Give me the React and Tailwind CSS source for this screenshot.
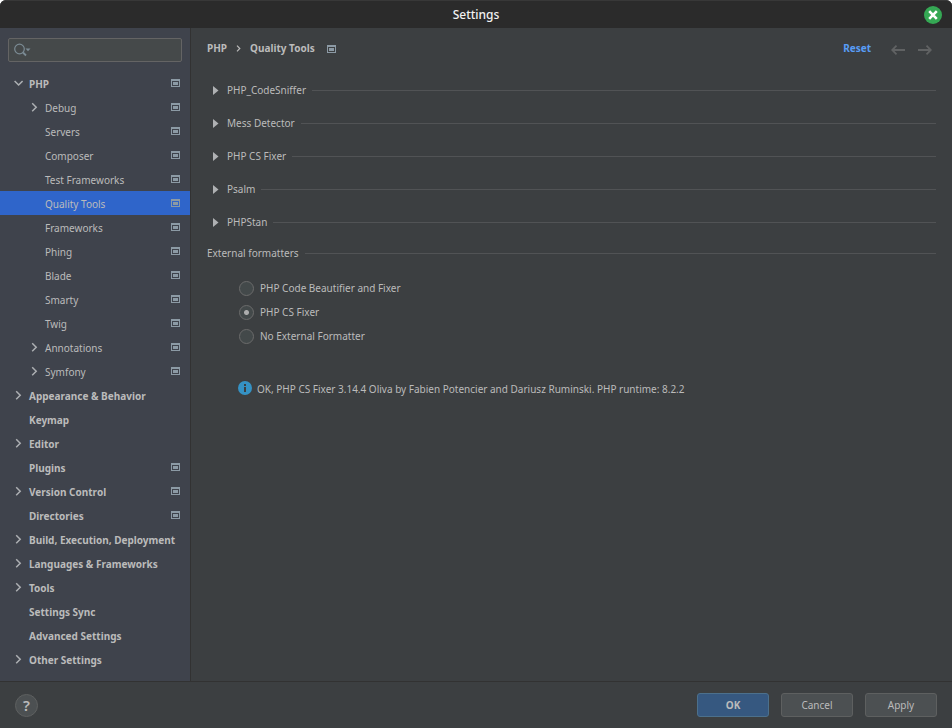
import { useState } from 'react';

const treeItems = [
    { label: 'PHP', level: 0, arrow: 'down', project: true },
    { label: 'Debug', level: 1, arrow: 'right', project: true },
    { label: 'Servers', level: 1, project: true },
    { label: 'Composer', level: 1, project: true },
    { label: 'Test Frameworks', level: 1, project: true },
    { label: 'Quality Tools', level: 1, project: true },
    { label: 'Frameworks', level: 1, project: true },
    { label: 'Phing', level: 1, project: true },
    { label: 'Blade', level: 1, project: true },
    { label: 'Smarty', level: 1, project: true },
    { label: 'Twig', level: 1, project: true },
    { label: 'Annotations', level: 1, arrow: 'right', project: true },
    { label: 'Symfony', level: 1, arrow: 'right', project: true },
    { label: 'Appearance & Behavior', level: 0, arrow: 'right' },
    { label: 'Keymap', level: 0 },
    { label: 'Editor', level: 0, arrow: 'right' },
    { label: 'Plugins', level: 0, project: true },
    { label: 'Version Control', level: 0, arrow: 'right', project: true },
    { label: 'Directories', level: 0, project: true },
    { label: 'Build, Execution, Deployment', level: 0, arrow: 'right' },
    { label: 'Languages & Frameworks', level: 0, arrow: 'right' },
    { label: 'Tools', level: 0, arrow: 'right' },
    { label: 'Settings Sync', level: 0 },
    { label: 'Advanced Settings', level: 0 },
    { label: 'Other Settings', level: 0, arrow: 'right' },
];

const tools = ['PHP_CodeSniffer', 'Mess Detector', 'PHP CS Fixer', 'Psalm', 'PHPStan'];

const formatters = ['PHP Code Beautifier and Fixer', 'PHP CS Fixer', 'No External Formatter'];

const ProjectIcon = () => (
    <svg width="9" height="8" viewBox="0 0 9 8" shapeRendering="crispEdges" className="shrink-0" aria-hidden="true">
        <path d="M0 0h9v8H0z M1 2v5h7V2z" fill="#8c9aa5" fillRule="evenodd" />
        <path d="M2 3h5v3H2z" fill="#8c9aa5" />
    </svg>
);

const Chevron = ({ direction }) => (
    <svg width="10" height="10" viewBox="0 0 10 10" fill="none" stroke="#adb0b3" strokeWidth="1.5" className="shrink-0" aria-hidden="true">
        {direction === 'down' && <path d="M1.6 3l4 4 4-4" />}
        {direction === 'right' && <path d="M3.2 1.3l4 4-4 4" />}
    </svg>
);

const Arrow = ({ flipped }) => (
    <svg width="14" height="10" viewBox="0 0 14 10" fill="none" stroke="#606263" strokeWidth="1.8" aria-hidden="true">
        {flipped ? <path d="M0 5h12.5M8.5 .7L12.8 5 8.5 9.3" /> : <path d="M14 5H1.5M5.5 .7L1.2 5l4.3 4.3" />}
    </svg>
);

const TitleBar = () => (
    <header className="grid h-7 grid-cols-[1fr_auto_1fr] items-center rounded-t-md border-t border-[#383838] bg-[#2b2b2b] px-[10px]">
        <h1 className="col-start-2 text-[12px] font-medium text-[#f2f2f2]">Settings</h1>
        <button type="button" aria-label="Close" className="justify-self-end rounded-full bg-[#35a854]">
            <svg width="18" height="18" viewBox="0 0 18 18" stroke="#fff" strokeWidth="2.6" aria-hidden="true">
                <path d="M5.2 5.2l7.6 7.6M12.8 5.2l-7.6 7.6" />
            </svg>
        </button>
    </header>
);

const TreeItem = ({ item, selected, onSelect }) => (
    <li>
        <button
            type="button"
            onClick={() => onSelect(item.label)}
            className={`flex h-6 w-full items-center gap-[6px] pr-[10px] text-left ${item.level ? 'pl-[29px]' : 'pl-[13px] font-bold'} ${selected ? 'bg-[#2f65ca]' : ''}`}
        >
            <Chevron direction={item.arrow} />
            <span className="grow pt-[2px] whitespace-nowrap">{item.label}</span>
            {item.project && <ProjectIcon />}
        </button>
    </li>
);

const Sidebar = () => {
    const [selected, setSelected] = useState('Quality Tools');

    return (
        <aside className="w-[191px] shrink-0 border-r border-[#323232] bg-[#3f434c] pt-[10px] pb-[10px]">
            <div className="mx-2 flex h-6 items-center rounded-xs border border-[#646464] bg-[#45494a] pl-[5px]">
                <svg width="18" height="14" viewBox="0 0 18 14" fill="none" stroke="#7b8b94" strokeWidth="1.2" className="shrink-0" aria-hidden="true">
                    <circle cx="5.5" cy="6" r="4.8" />
                    <path d="M9 9.5l3 3" strokeWidth="1.8" />
                    <path d="M11.5 5.5h5L14 8.2z" fill="#7b8b94" stroke="none" />
                </svg>
                <input type="text" aria-label="Search settings" className="h-full w-full bg-transparent outline-none" />
            </div>
            <ul className="mt-[9px]">
                {treeItems.map((item) => (
                    <TreeItem
                        key={item.label}
                        item={item}
                        selected={selected === item.label}
                        onSelect={setSelected}
                    />
                ))}
            </ul>
        </aside>
    );
};

const QualityTools = () => {
    const [formatter, setFormatter] = useState('PHP CS Fixer');

    return (
        <main className="grow px-4">
            <div className="flex h-10 items-center">
                <nav aria-label="Breadcrumb" className="flex items-center font-bold">
                    <span>PHP</span>
                    <svg width="5" height="7" viewBox="0 0 5 7" fill="none" stroke="#bbbbbb" strokeWidth="1.2" className="mx-[9px]" aria-hidden="true">
                        <path d="M1 .7l2.8 2.8L1 6.3" />
                    </svg>
                    <span className="mr-3">Quality Tools</span>
                    <span className="pt-[2px]"><ProjectIcon /></span>
                </nav>
                <div className="ml-auto flex items-center">
                    <a href="#reset" className="mr-5 font-bold text-[#589df6]">Reset</a>
                    <button type="button" aria-label="Back" className="mr-[13px] pt-1"><Arrow /></button>
                    <button type="button" aria-label="Forward" className="mr-1 pt-1"><Arrow flipped /></button>
                </div>
            </div>

            <div className="mt-[6px]">
                {tools.map((tool) => (
                    <button key={tool} type="button" className="flex h-[33px] w-full items-center pl-[6px]">
                        <svg width="6" height="9" viewBox="0 0 6 9" fill="#afb1b3" className="mr-2 mb-px" aria-hidden="true">
                            <path d="M0 0l5.5 4.5L0 9z" />
                        </svg>
                        <span className="pb-px">{tool}</span>
                        <span className="ml-[6px] h-px grow bg-[#515355]" />
                    </button>
                ))}
            </div>

            <fieldset>
                <legend className="flex h-[29px] w-full items-center">
                    <span className="pb-px">External formatters</span>
                    <span className="ml-[6px] h-px grow bg-[#515355]" />
                </legend>
                <div className="mt-2 pl-8">
                    {formatters.map((name) => (
                        <label key={name} className="flex h-6 w-fit items-center gap-[6px]">
                            <input
                                type="radio"
                                name="formatter"
                                checked={formatter === name}
                                onChange={() => setFormatter(name)}
                                className="size-[15px] appearance-none rounded-full border border-[#6b6b6b] bg-[#43494a] checked:bg-[radial-gradient(circle,#adadad_2px,#43494a_3px)]"
                            />
                            <span>{name}</span>
                        </label>
                    ))}
                </div>
            </fieldset>

            <p className="mt-8 flex items-center gap-[5px] pl-[31px]">
                <svg width="14" height="14" viewBox="0 0 14 14" className="shrink-0" aria-hidden="true">
                    <circle cx="7" cy="7" r="7" fill="#3592c4" />
                    <path d="M6 3h2v2H6zM6 6h2v5H6z" fill="#3c3f41" />
                </svg>
                <span className="pt-[2px]">OK, PHP CS Fixer 3.14.4 Oliva by Fabien Potencier and Dariusz Ruminski. PHP runtime: 8.2.2</span>
            </p>
        </main>
    );
};

const DialogFooter = () => (
    <footer className="flex h-[47px] items-center border-t border-[#323232] px-[15px]">
        <button
            type="button"
            aria-label="Help"
            className="flex size-[23px] items-center justify-center rounded-full border border-[#5e6060] bg-[#4c5052] text-[15px] font-semibold"
        >
            ?
        </button>
        <div className="ml-auto flex gap-3">
            <button type="button" className="h-6 w-[72px] rounded-[3px] border border-[#4c708c] bg-[#365880] font-bold">
                OK
            </button>
            <button type="button" className="h-6 w-[72px] rounded-[3px] border border-[#5e6060] bg-[#4c5052]">
                Cancel
            </button>
            <button type="button" className="h-6 w-[72px] rounded-[3px] border border-[#5e6060] bg-[#4c5052]">
                Apply
            </button>
        </div>
    </footer>
);

const App = () => (
    <div className="bg-white">
        <div className="flex min-h-screen flex-col rounded-t-md bg-[#3c3f41] font-['Noto_Sans','Open_Sans',sans-serif] text-[10px] leading-[14px] text-[#bbbbbb]">
            <TitleBar />
            <div className="flex grow">
                <Sidebar />
                <QualityTools />
            </div>
            <DialogFooter />
        </div>
    </div>
);

export default App;
